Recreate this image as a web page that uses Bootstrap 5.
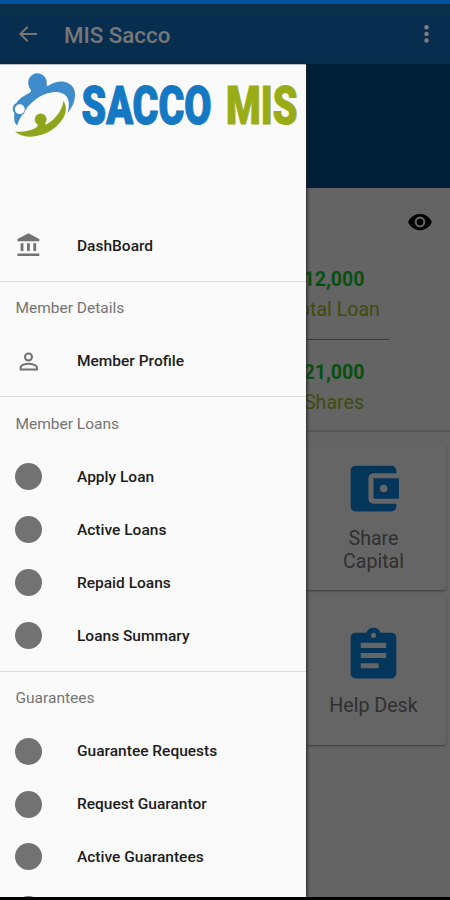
<!DOCTYPE html>
<html lang="en">
<head>
<meta charset="utf-8">
<meta name="viewport" content="width=device-width, initial-scale=1">
<title>MIS Sacco</title>
<link href="https://cdn.jsdelivr.net/npm/bootstrap@5.3.0/dist/css/bootstrap.min.css" rel="stylesheet">
<style>
body{font-family:Roboto,sans-serif;background:#000;line-height:1.2}
.phone{width:450px;height:900px;background:#646464;border-bottom:3px solid #000}
.strip{height:4px;background:#0153a0}
.appbar{height:60px;background:linear-gradient(#0a2f49 0 12px,#072e4f 12px);color:#777777;padding:0 15px 0 16px}
.appbar .title{font-size:22.3px;font-weight:500;margin-left:24px;padding-top:2px}
.hero{height:124px;background:#001f38}
.panel{height:244px;background:#646464;border-bottom:2px solid #555;padding-right:61px}
.eye{top:21px;right:17px}
.totals{width:110px;padding-top:70px}
.total-row{height:81px;padding-top:10px}
.total-row+.total-row{border-top:1px solid #3d3d3d;padding-top:21px}
.amount{color:#075010;font-size:19.6px;font-weight:700;line-height:24px}
.caption{color:#404b0c;font-size:19.6px;line-height:24px;margin-top:6px}
.tiles{padding:13px 4px 0 0;gap:7px}
.tile{width:145px;background:#656565;color:#303030;border-radius:3px;box-shadow:0 1px 2px #3c3c3c;font-size:19.6px;line-height:23px}
.tile-a{height:145px;padding-top:13px}
.tile-b{height:148px;padding-top:28px}
.drawer{left:0;top:64px;width:306px;height:833px;background:#fafafa;box-shadow:1px 0 3px #222;border-top:1px solid #b9bdc2}
.logo{width:306px;height:154px}
.group{padding-bottom:8.9px;border-bottom:1px solid #dedede}
.entry,.heading{height:52.9px}
.entry{font-size:15.5px;font-weight:500;color:#1c1c1c;padding-left:15px;gap:35px}
.entry span{padding-top:1px}
.entry svg{width:27px;height:27px;flex:none}
.dot{width:27px;height:27px;background:#727272;flex:none}
.heading{font-size:15.5px;color:#747474;padding:1px 0 0 15.5px}
</style>
<script src="https://cdn.jsdelivr.net/npm/bootstrap@5.3.0/dist/js/bootstrap.bundle.min.js"></script>
</head>
<body>
<div class="phone position-relative overflow-hidden">
  <div class="strip"></div>
  <header class="appbar d-flex align-items-center">
    <svg width="24" height="24" viewBox="0 0 24 24" fill="#777"><path d="M21 11H6.8l5.600-5.600L11 4l-8 8 8 8 1.400-1.400L6.800 13H21z"/></svg>
    <span class="title">MIS Sacco</span>
    <svg class="ms-auto" width="17" height="24" viewBox="0 0 17 24" fill="#808080"><circle cx="8.500" cy="5.200" r="2.200"/><circle cx="8.500" cy="11.900" r="2.200"/><circle cx="8.500" cy="18.500" r="2.200"/></svg>
  </header>
  <div class="hero"></div>
  <section class="panel position-relative d-flex justify-content-end">
    <svg class="eye position-absolute" width="26" height="26" viewBox="0 0 24 24" fill="#000"><path d="M12 4.500C7 4.500 2.700 7.600 1 12c1.700 4.400 6 7.500 11 7.500s9.300-3.100 11-7.500c-1.700-4.400-6-7.500-11-7.500zM12 17a5 5 0 1 1 0-10 5 5 0 0 1 0 10zm0-8a3 3 0 1 0 0 6 3 3 0 0 0 0-6z"/></svg>
    <div class="totals text-center">
      <div class="total-row"><div class="amount">12,000</div><div class="caption">Total Loan</div></div>
      <div class="total-row"><div class="amount">21,000</div><div class="caption">Shares</div></div>
    </div>
  </section>
  <section class="tiles d-flex flex-column align-items-end">
    <div class="tile tile-a d-flex flex-column align-items-center text-center">
      <svg width="61" height="61" viewBox="0 0 24 24" fill="#04365c"><path d="M21 18v1a2 2 0 0 1-2 2H5a2 2 0 0 1-2-2V5a2 2 0 0 1 2-2h14a2 2 0 0 1 2 2v1h-9a2 2 0 0 0-2 2v8a2 2 0 0 0 2 2zm-9-2h10V8H12zm4-2.500a1.500 1.500 0 1 1 0-3 1.500 1.500 0 0 1 0 3z"/></svg>
      <div class="mt-1 pt-1">Share<br>Capital</div>
    </div>
    <div class="tile tile-b d-flex flex-column align-items-center text-center">
      <svg width="61" height="61" viewBox="0 0 24 24" fill="#04365c"><path d="M19 3h-4.200a3 3 0 0 0-5.600 0H5a2 2 0 0 0-2 2v14a2 2 0 0 0 2 2h14a2 2 0 0 0 2-2V5a2 2 0 0 0-2-2zm-7 0a1 1 0 1 1 0 2 1 1 0 0 1 0-2zm2 14H7v-2h7zm3-4H7v-2h10zm0-4H7V7h10z"/></svg>
      <div class="mt-2">Help Desk</div>
    </div>
  </section>

  <nav class="drawer position-absolute overflow-hidden">
    <svg class="logo d-block" viewBox="0 65 306 154">
      <g fill="#3f8ccc">
        <path d="M28.500 85a9.300 9.300 0 1 1 18.100-.5q0 1.700 1.600 1.300C53 83 58 81 64 81.800c7 1.200 11.500 6.500 11 13.700-.3 7-3.500 13-7.500 17.500 1.500-5 2-10 .5-14-3.500-8-14-8.500-24-4.500C33 99 22 111 17 125.500c-3-3-3.200-7-2.500-12L17 102c4-5 9.500-7.500 13-9.500q2-1.500 .5-3-1.500-2-2-4.500z"/>
        <circle cx="19.200" cy="108.800" r="6.500"/>
      </g>
      <circle cx="19.800" cy="109.200" r="4.900" fill="#fafafa"/>
      <g fill="#8fa51c">
        <path d="M15 131.500c7 1 12.500-.2 18-2.200l4-2.300q1-3 4-3 4 0 4.500.8C53 121.500 62 112 63.500 100.700c3.500 6 3 11.500-.5 17.800C55 131 43 136 30 136.700c-6 .2-11-1.700-15-5.200z"/>
        <circle cx="40.700" cy="119.500" r="5.900"/>
        <path d="M38 123h7l1 3-9 3z"/>
      </g>
      <g font-family="Roboto,sans-serif" font-size="53.500" font-weight="900" stroke-width="1.200">
        <text transform="translate(81.500 123.500) scale(.73 1)" textLength="178" lengthAdjust="spacingAndGlyphs" fill="#1478c2" stroke="#1478c2">SACCO</text>
        <text transform="translate(226 123.500) scale(.73 1)" textLength="98" lengthAdjust="spacingAndGlyphs" fill="#99ac16" stroke="#99ac16">MIS</text>
      </g>
    </svg>
    <div class="group">
      <div class="entry d-flex align-items-center"><svg viewBox="0 0 24 24" fill="#727272"><path d="M5 10v6.800h2.500V10zm5.700 0v6.800h2.500V10zM2.200 21.300h19.400V19H2.200zM16.300 10v6.800h2.500V10zM12 1.200 2.200 6.300V8.200h19.400V6.300z"/></svg><span>DashBoard</span></div>
    </div>
    <div class="group">
      <div class="heading d-flex align-items-center">Member Details</div>
      <div class="entry d-flex align-items-center"><svg viewBox="0 0 24 24" fill="none" stroke="#727272" stroke-width="1.800"><circle cx="12" cy="8" r="3.100"/><path d="M5 19.200V17.500C5 15 9.500 13.900 12 13.900S19.500 15 19.500 17.500v1.700z"/></svg><span>Member Profile</span></div>
    </div>
    <div class="group">
      <div class="heading d-flex align-items-center">Member Loans</div>
      <div class="entry d-flex align-items-center"><i class="dot rounded-circle"></i><span>Apply Loan</span></div>
      <div class="entry d-flex align-items-center"><i class="dot rounded-circle"></i><span>Active Loans</span></div>
      <div class="entry d-flex align-items-center"><i class="dot rounded-circle"></i><span>Repaid Loans</span></div>
      <div class="entry d-flex align-items-center"><i class="dot rounded-circle"></i><span>Loans Summary</span></div>
    </div>
    <div class="group">
      <div class="heading d-flex align-items-center">Guarantees</div>
      <div class="entry d-flex align-items-center"><i class="dot rounded-circle"></i><span>Guarantee Requests</span></div>
      <div class="entry d-flex align-items-center"><i class="dot rounded-circle"></i><span>Request Guarantor</span></div>
      <div class="entry d-flex align-items-center"><i class="dot rounded-circle"></i><span>Active Guarantees</span></div>
      <div class="entry d-flex align-items-center"><i class="dot rounded-circle"></i></div>
    </div>
  </nav>
</div>
</body>
</html>
